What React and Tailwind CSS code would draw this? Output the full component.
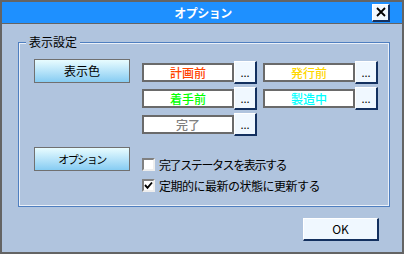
import React from "react";

const raised =
  "bg-[#f0f8ff] border-t border-l border-t-white border-l-white border-r-2 border-b-2 border-r-[#13305f] border-b-[#13305f]";
const grad =
  "w-[96px] h-[24px] border border-[#707070] bg-linear-to-b from-[#e8fcff] to-[#86ccf2] flex items-center justify-center text-black";

function ColorField({ label, color }) {
  return (
    <div className="flex items-center">
      <div
        className={`w-[92px] h-[19px] bg-white border-2 border-[#6a6a6a] flex items-center justify-center text-[12px] font-medium leading-none ${color}`}
      >
        {label}
      </div>
      <button className={`w-[23px] h-[23px] ${raised} flex items-center justify-center text-[11px] leading-none text-black`}>
        ...
      </button>
    </div>
  );
}

function Check({ checked, label, cls }) {
  return (
    <div className="flex items-center gap-[4px]">
      <div className="w-[13px] h-[13px] bg-white border-2 border-t-[#808080] border-l-[#808080] border-r-[#eeeeee] border-b-[#eeeeee] flex items-center justify-center">
        {checked && (
          <svg width="9" height="9" viewBox="0 0 9 9">
            <polyline points="1,4 3.5,6.8 8,1.5" fill="none" stroke="#000" strokeWidth="1.9" />
          </svg>
        )}
      </div>
      <span className={`text-[12px] leading-[13px] text-black whitespace-nowrap ${cls}`}>{label}</span>
    </div>
  );
}

export default function App() {
  return (
    <div className="w-[404px] h-[254px] border-2 border-[#646464] bg-[#b0c4de] flex flex-col font-['Noto_Sans_CJK_JP',sans-serif]">
      <div className="h-[22px] bg-[#1e90ff] border-b border-[#646464] grid grid-cols-[1fr_auto_1fr] items-center">
        <div />
        <div className="text-white font-bold text-[12px] leading-none pl-[2px] tracking-[-0.5px]">オプション</div>
        <button className={`justify-self-end mr-[12px] w-[18px] h-[18px] ${raised} flex items-center justify-center`}>
          <svg width="10" height="10" viewBox="0 0 10 10">
            <path d="M1 1 L9 9 M9 1 L1 9" stroke="#000" strokeWidth="1.8" fill="none" />
          </svg>
        </button>
      </div>
      <div className="flex-1 flex flex-col pl-[16px] pr-[12px] pt-[18px]">
        <div className="relative h-[165px] border border-[#4f7fc0] shadow-[inset_0_0_0_1px_#eaf0f8] pl-[15px] pt-[16px]">
          <div className="absolute -top-[8px] left-[7px] px-[3px] bg-[#b0c4de] text-[12px] leading-[14px] text-black">
            表示設定
          </div>
          <div className="flex items-start">
            <button className={`${grad} text-[12px]`}>表示色</button>
            <div className="ml-[12px] mt-[2px] grid grid-cols-[auto_auto] gap-x-[6px] gap-y-[3px]">
              <ColorField label="計画前" color="text-[#ff4500]" />
              <ColorField label="発行前" color="text-[#ffd700]" />
              <ColorField label="着手前" color="text-[#00ff00]" />
              <ColorField label="製造中" color="text-[#00ffff]" />
              <ColorField label="完了" color="text-[#808080]" />
            </div>
          </div>
          <div className="flex items-start mt-[11px]">
            <button className={`${grad} text-[11px] tracking-[-1.5px]`}>オプション</button>
            <div className="ml-[12px] mt-[11px] flex flex-col gap-[8px]">
              <Check label="完了ステータスを表示する" cls="tracking-[-1.4px]" />
              <Check checked label="定期的に最新の状態に更新する" cls="tracking-[-0.5px]" />
            </div>
          </div>
        </div>
        <div className="flex justify-end mt-[11px] mr-[11px]">
          <button className={`w-[76px] h-[23px] ${raised} flex items-center justify-center text-[12px] leading-none text-black`}>
            OK
          </button>
        </div>
      </div>
    </div>
  );
}
